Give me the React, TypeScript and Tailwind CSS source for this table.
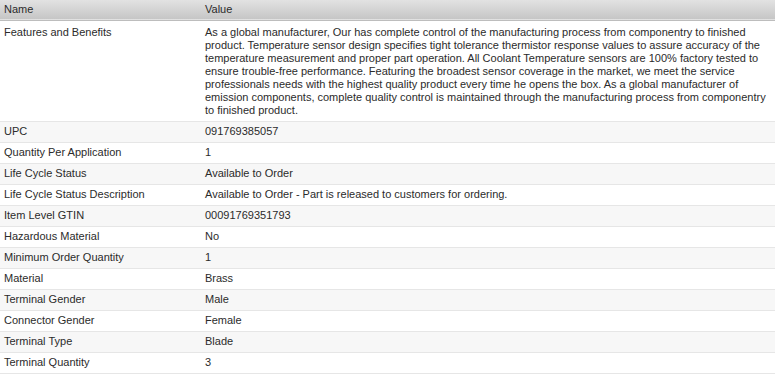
import React from 'react';

const DESCRIPTION_LINES = [
    'As a global manufacturer, Our has complete control of the manufacturing process from componentry to finished',
    'product. Temperature sensor design specifies tight tolerance thermistor response values to assure accuracy of the',
    'temperature measurement and proper part operation. All Coolant Temperature sensors are 100% factory tested to',
    'ensure trouble-free performance. Featuring the broadest sensor coverage in the market, we meet the service',
    'professionals needs with the highest quality product every time he opens the box. As a global manufacturer of',
    'emission components, complete quality control is maintained through the manufacturing process from componentry',
    'to finished product.',
];

const SPECS: [string, string][] = [
    ['UPC', '091769385057'],
    ['Quantity Per Application', '1'],
    ['Life Cycle Status', 'Available to Order'],
    ['Life Cycle Status Description', 'Available to Order - Part is released to customers for ordering.'],
    ['Item Level GTIN', '00091769351793'],
    ['Hazardous Material', 'No'],
    ['Minimum Order Quantity', '1'],
    ['Material', 'Brass'],
    ['Terminal Gender', 'Male'],
    ['Connector Gender', 'Female'],
    ['Terminal Type', 'Blade'],
    ['Terminal Quantity', '3'],
];

export default function App() {
    return (
        <div className="w-[775px] h-[383px] bg-white overflow-hidden font-['Liberation_Sans',Arial,sans-serif] text-[11px] text-[#2b2b2b]">
            <table className="w-full border-collapse text-left">
                <thead>
                    <tr className="h-[20px] bg-gradient-to-b from-[#e2e2e2] to-[#c6c6c6] border-b border-[#bdbdbd]">
                        <th className="w-[201px] pl-[4px] font-normal leading-none">Name</th>
                        <th className="pl-[4px] font-normal leading-none">Value</th>
                    </tr>
                </thead>
                <tbody>
                    {/* Long description row */}
                    <tr className="border-b border-[#e6e6e6] align-top">
                        <td className="pl-[4px] pt-[5px] leading-[13px]">Features and Benefits</td>
                        <td className="pl-[4px] pt-[5px] pb-[4px] leading-[13px]">
                            {DESCRIPTION_LINES.map((line, i) => (
                                <div key={i} className="whitespace-nowrap">{line}</div>
                            ))}
                        </td>
                    </tr>
                    {SPECS.map(([name, value], index) => (
                        <tr
                            key={name}
                            className={index % 2 === 0 ? 'h-[21px] bg-[#f7f7f7] border-b border-[#e6e6e6]' : 'h-[21px] bg-white border-b border-[#e6e6e6]'}
                        >
                            <td className="pl-[4px] leading-none">{name}</td>
                            <td className="pl-[4px] leading-none">{value}</td>
                        </tr>
                    ))}
                </tbody>
            </table>
        </div>
    );
}
